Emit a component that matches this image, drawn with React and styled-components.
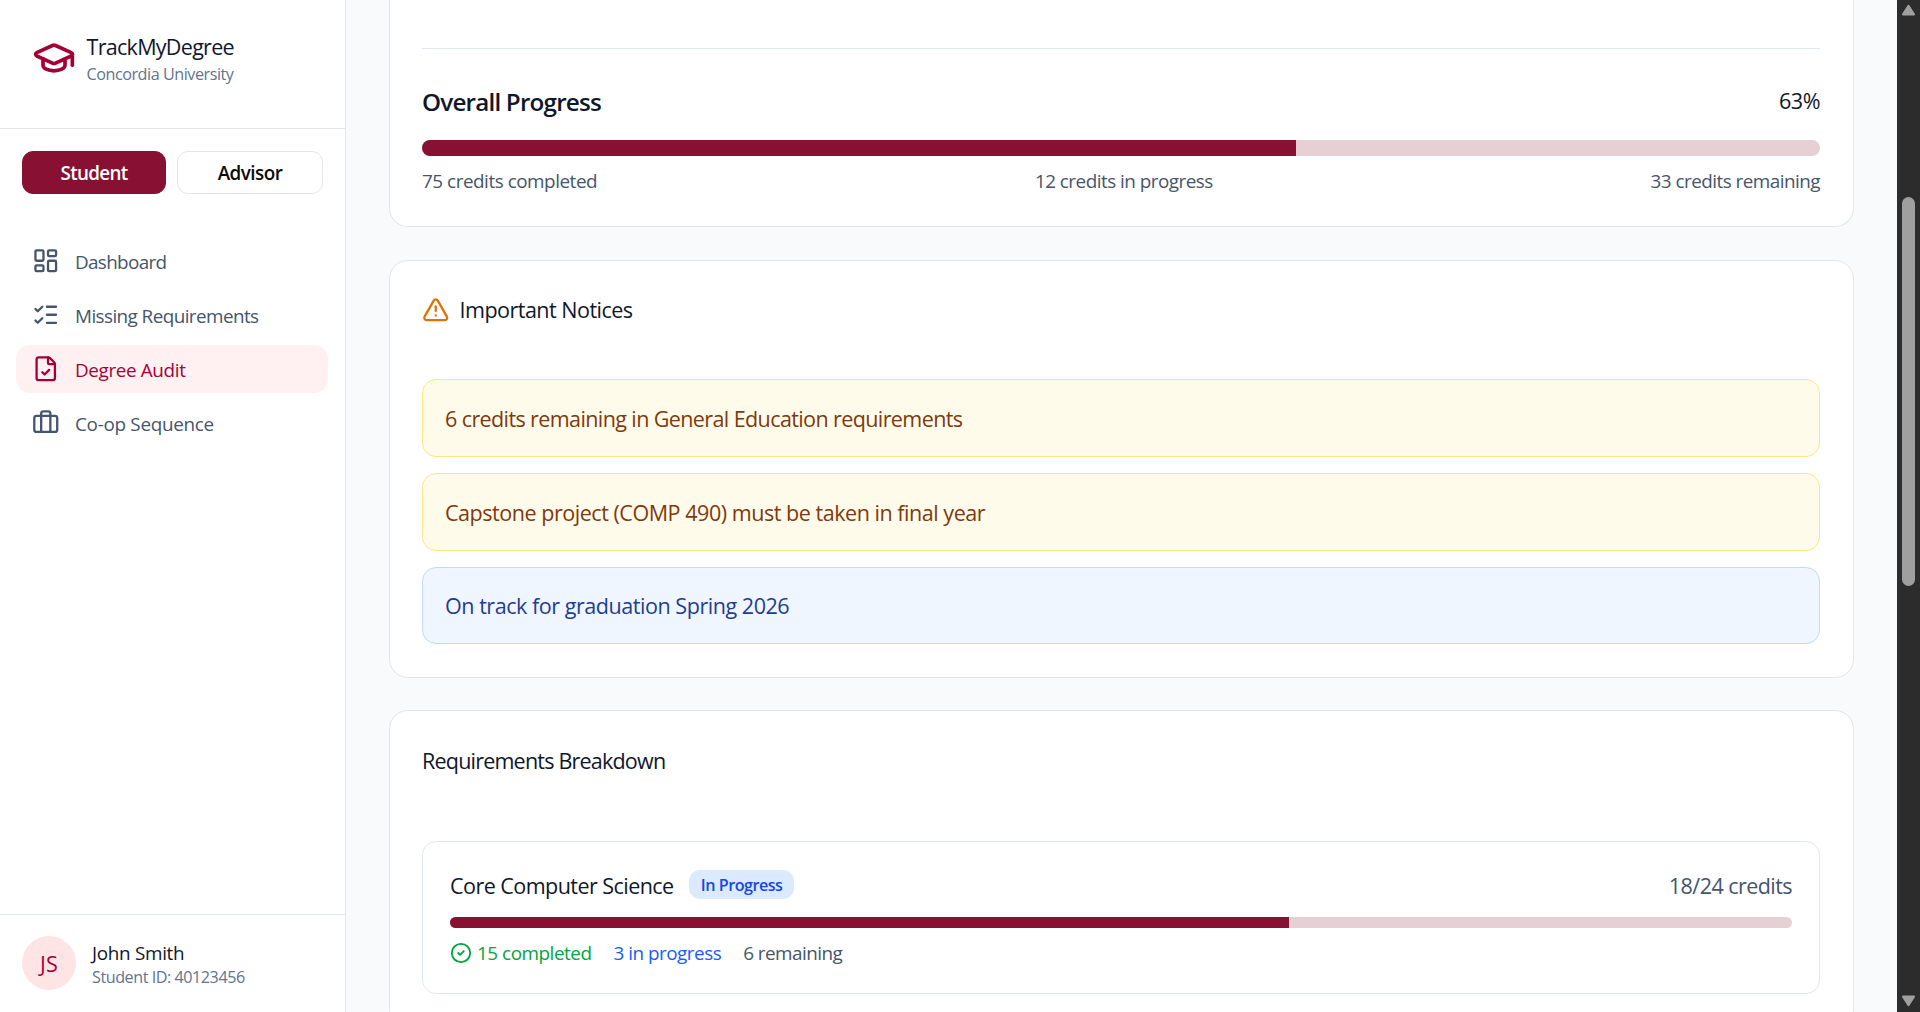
import React from "react";
import styled, { createGlobalStyle, css } from "styled-components";
import {
  GraduationCap,
  LayoutDashboard,
  ListChecks,
  FileCheck,
  Briefcase,
  TriangleAlert,
  CircleCheck,
} from "lucide-react";

const GlobalStyle = createGlobalStyle`
  *, *::before, *::after { box-sizing: border-box; }
  html, body, #root { height: 100%; }
  body {
    margin: 0;
    overflow: hidden;
    background: #f8fafc;
    color: #0f172b;
    font-family: "Segoe UI", "Open Sans", "Noto Sans", sans-serif;
    font-size: 21.56px;
    line-height: 33px;
  }
`;

const sizes = {
  xs: css`font-size: 16.17px; line-height: 22px;`,
  sm: css`font-size: 18.87px; line-height: 27px; padding-top: 1px; margin-bottom: -1px;`,
  base: css`font-size: 21.56px; line-height: 33px;`,
  lg: css`font-size: 24.26px; line-height: 33px; font-weight: 600; padding-top: 1px; margin-bottom: -1px;`,
};

const Text = styled.span`
  display: block;
  white-space: nowrap;
  color: ${(p) => p.$color || "inherit"};
  letter-spacing: ${(p) => p.$track || -0.5}px;
  ${(p) => sizes[p.$size || "base"]}
`;

const Shell = styled.div`
  display: flex;
  height: 1012px;
  overflow: hidden;
`;

/* Sidebar */
const Sidebar = styled.aside`
  display: flex;
  flex-direction: column;
  flex: 0 0 346px;
  background: #ffffff;
  border-right: 1px solid #e2e8f0;
`;

const Brand = styled.header`
  display: flex;
  align-items: flex-start;
  gap: 11px;
  height: 129px;
  padding: 30px 31.5px 0;
  border-bottom: 1px solid #e5e5e5;

  svg { margin-top: 6px; color: #a50036; }
`;

const RoleSwitch = styled.div`
  display: grid;
  grid-template-columns: 144px 146px;
  gap: 11px;
  padding: 22px 22px 43px;
`;

const RoleButton = styled.button`
  height: 43px;
  padding: 2px 0 0;
  border-radius: 11px;
  border: 1px solid ${(p) => (p.$active ? "#881133" : "#e5e5e5")};
  background: ${(p) => (p.$active ? "#881133" : "#ffffff")};
  color: ${(p) => (p.$active ? "#ffffff" : "#0a0a0a")};
  font-family: inherit;
  font-size: 18.87px;
  line-height: 27px;
  font-weight: 600;
  letter-spacing: ${(p) => p.$track}px;
`;

const Nav = styled.nav`
  display: flex;
  flex-direction: column;
  flex: 1;
  gap: 6px;
  padding: 0 17px 0 16px;
`;

const NavItem = styled.a`
  display: flex;
  align-items: center;
  gap: 16px;
  height: 48px;
  padding: 0 15.5px;
  border-radius: 14px;
  color: ${(p) => (p.$active ? "#a50036" : "#45556c")};
  background: ${(p) => (p.$active ? "#fff1f2" : "transparent")};
`;

const Profile = styled.footer`
  display: flex;
  align-items: center;
  gap: 16px;
  height: 98px;
  padding: 0 22px 1px;
  border-top: 1px solid #e2e8f0;
`;

const Avatar = styled.div`
  display: flex;
  align-items: center;
  justify-content: center;
  width: 54px;
  height: 54px;
  border-radius: 50%;
  background: #ffe4e6;
`;

/* Content */
const Main = styled.main`
  display: flex;
  flex-direction: column;
  flex: 1;
  min-width: 0;
  padding: 0 43px;
  overflow: hidden;
`;

const Card = styled.section`
  flex: none;
  padding: 32px 33px 33px 32px;
  margin-bottom: ${(p) => p.$gap || 33}px;
  background: #ffffff;
  border: 1px solid #e5e5e5;
  border-radius: 19px;
`;

const SummaryCard = styled(Card)`
  padding: 48px 33px 32px 32px;
  border-top: 0;
  border-radius: 0 0 19px 19px;
`;

const Divider = styled.div`
  height: 1px;
  margin-bottom: 35px;
  background: #e2e8f0;
`;

const Between = styled.div`
  display: flex;
  align-items: center;
  justify-content: space-between;
`;

const Track = styled.div`
  height: ${(p) => p.$height}px;
  margin: ${(p) => p.$top}px 0 11px;
  border-radius: 999px;
  background: #e7cfd6;
  overflow: hidden;
`;

const Fill = styled.div`
  height: 100%;
  background: #881133;
`;

const CardTitle = styled.div`
  display: flex;
  align-items: center;
  gap: ${(p) => p.$gap || 0}px;
  height: 33px;
  margin: ${(p) => p.$top || 0}px 0 ${(p) => p.$bottom}px;

  svg { color: #e17100; }
`;

const NoticeList = styled.div`
  display: flex;
  flex-direction: column;
  gap: 16px;
`;

const tones = {
  warning: css`background: #fffbeb; border-color: #fee685; color: #80390c;`,
  info: css`background: #eff6ff; border-color: #bedbff; color: #1f3d93;`,
};

const Notice = styled.div`
  display: flex;
  align-items: center;
  height: ${(p) => p.$height}px;
  padding: 0 22px;
  border: 1px solid;
  border-radius: 14px;
  ${(p) => tones[p.$tone]}
`;

const Requirement = styled.article`
  padding: 27px;
  border: 1px solid #e2e8f0;
  border-radius: 14px;
`;

const Heading = styled.div`
  display: flex;
  align-items: center;
  gap: 15.5px;
`;

const Badge = styled.span`
  display: flex;
  align-items: center;
  justify-content: center;
  width: 105px;
  height: 29px;
  margin-bottom: 2px;
  padding-top: 2px;
  border-radius: 11px;
  background: #dbeafe;
  color: #1447e6;
  font-size: 16.17px;
  font-weight: 600;
  letter-spacing: -0.5px;
  white-space: nowrap;
`;

const Stats = styled.div`
  display: flex;
  gap: 22px;
`;

const Completed = styled.div`
  display: flex;
  align-items: center;
  gap: 5px;
  color: #00a63e;
`;

/* Page scrollbar */
const Scrollbar = styled.div`
  display: flex;
  flex-direction: column;
  align-items: center;
  justify-content: space-between;
  flex: 0 0 23px;
  padding: 4px 0 5px;
  background: #2c2c2c;
`;

const Rail = styled.div`
  flex: 1;
  padding-top: 181px;
`;

const Thumb = styled.div`
  width: 13px;
  height: 389px;
  border-radius: 7px;
  background: #9f9f9f;
`;

const Arrow = ({ down }) => (
  <svg width="15" height="12" viewBox="0 0 15 12">
    <path
      d={down ? "M2 1.6h11L7.5 10.2z" : "M2 10.4h11L7.5 1.8z"}
      fill="#9f9f9f"
      stroke="#9f9f9f"
      strokeWidth="2"
      strokeLinejoin="round"
    />
  </svg>
);

const navItems = [
  { label: "Dashboard", icon: LayoutDashboard, track: -0.66 },
  { label: "Missing Requirements", icon: ListChecks, track: -0.57 },
  { label: "Degree Audit", icon: FileCheck, track: -0.36, active: true },
  { label: "Co-op Sequence", icon: Briefcase, track: -0.29 },
];

const notices = [
  { text: "6 credits remaining in General Education requirements", tone: "warning", height: 78, track: -0.62 },
  { text: "Capstone project (COMP 490) must be taken in final year", tone: "warning", height: 78, track: -0.48 },
  { text: "On track for graduation Spring 2026", tone: "info", height: 77, track: -0.47 },
];

export default function App() {
  return (
    <>
      <GlobalStyle />
      <Shell>
        <Sidebar>
          <Brand>
            <GraduationCap size={44} />
            <div>
              <Text $track={-0.73}>TrackMyDegree</Text>
              <Text $size="xs" $color="#62748e" $track={-0.46}>Concordia University</Text>
            </div>
          </Brand>
          <RoleSwitch>
            <RoleButton $active $track={-0.7}>Student</RoleButton>
            <RoleButton $track={-0.54}>Advisor</RoleButton>
          </RoleSwitch>
          <Nav>
            {navItems.map(({ label, icon: Icon, track, active }) => (
              <NavItem key={label} $active={active}>
                <Icon size={27.5} />
                <Text $size="sm" $track={track}>{label}</Text>
              </NavItem>
            ))}
          </Nav>
          <Profile>
            <Avatar>
              <Text $color="#a50036" $track={0.2}>JS</Text>
            </Avatar>
            <div>
              <Text $size="sm" $track={-0.3}>John Smith</Text>
              <Text $size="xs" $color="#62748e" $track={-0.46}>Student ID: 40123456</Text>
            </div>
          </Profile>
        </Sidebar>

        <Main>
          <SummaryCard>
            <Divider />
            <Between>
              <Text $size="lg" $track={-0.82}>Overall Progress</Text>
              <Text $track={-0.5}>63%</Text>
            </Between>
            <Track $height={16} $top={23}>
              <Fill style={{ width: `${(75 / 120) * 100}%` }} />
            </Track>
            <Between>
              <Text $size="sm" $color="#45556c" $track={-0.46}>75 credits completed</Text>
              <Text $size="sm" $color="#45556c" $track={-0.51}>12 credits in progress</Text>
              <Text $size="sm" $color="#45556c" $track={-0.52}>33 credits remaining</Text>
            </Between>
          </SummaryCard>

          <Card $gap={32}>
            <CardTitle $gap={10} $bottom={53}>
              <TriangleAlert size={27.5} />
              <Text $track={-0.53}>Important Notices</Text>
            </CardTitle>
            <NoticeList>
              {notices.map((n) => (
                <Notice key={n.text} $tone={n.tone} $height={n.height}>
                  <Text $track={n.track}>{n.text}</Text>
                </Notice>
              ))}
            </NoticeList>
          </Card>

          <Card>
            <CardTitle $top={1} $bottom={64}>
              <Text $track={-0.81}>Requirements Breakdown</Text>
            </CardTitle>
            <Requirement>
              <Between>
                <Heading>
                  <Text $track={-0.56}>Core Computer Science</Text>
                  <Badge>In Progress</Badge>
                </Heading>
                <Text $color="#45556c" $track={-0.57}>18/24 credits</Text>
              </Between>
              <Track $height={11} $top={15}>
                <Fill style={{ width: `${(15 / 24) * 100}%` }} />
              </Track>
              <Stats>
                <Completed>
                  <CircleCheck size={22} />
                  <Text $size="sm" $track={-0.46}>15 completed</Text>
                </Completed>
                <Text $size="sm" $color="#155dfc" $track={-0.49}>3 in progress</Text>
                <Text $size="sm" $color="#45556c" $track={-0.53}>6 remaining</Text>
              </Stats>
            </Requirement>
          </Card>
        </Main>

        <Scrollbar>
          <Arrow />
          <Rail>
            <Thumb />
          </Rail>
          <Arrow down />
        </Scrollbar>
      </Shell>
    </>
  );
}
